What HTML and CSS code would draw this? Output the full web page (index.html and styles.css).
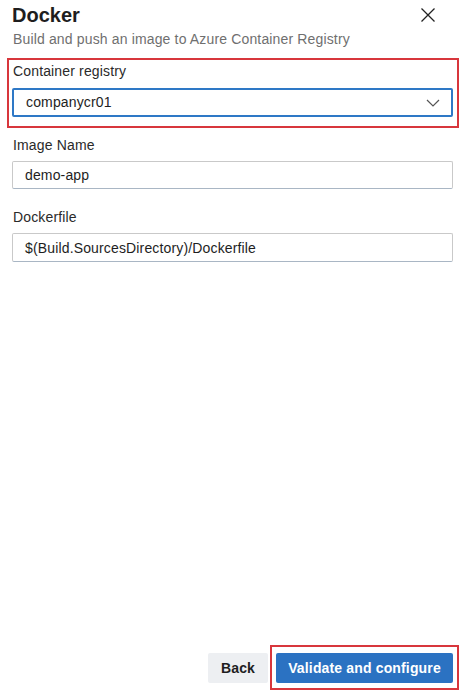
FILE: index.html
```html
<!DOCTYPE html>
<html lang="en">
<head>
<meta charset="utf-8">
<title>Docker</title>
<link rel="stylesheet" href="styles.css">
</head>
<body>
<div class="panel">
  <header class="header">
    <div class="header-text">
      <h1 class="title">Docker</h1>
      <p class="subtitle">Build and push an image to Azure Container Registry</p>
    </div>
    <button class="close" aria-label="Close">
      <svg width="16" height="16" viewBox="0 0 16 16"><path d="M1.5 1.5 L14.5 14.5 M14.5 1.5 L1.5 14.5" stroke="#222" stroke-width="1.3" fill="none"/></svg>
    </button>
  </header>

  <div class="highlight field-first">
    <label class="label">Container registry</label>
    <div class="select">
      <span class="select-value">companycr01</span>
      <svg class="chevron" width="14" height="8" viewBox="0 0 14 8"><path d="M1 1 L7 7 L13 1" stroke="#555" stroke-width="1.2" fill="none"/></svg>
    </div>
  </div>

  <div class="field field-image">
    <label class="label">Image Name</label>
    <div class="input">demo-app</div>
  </div>

  <div class="field field-docker">
    <label class="label">Dockerfile</label>
    <div class="input input-tall">$(Build.SourcesDirectory)/Dockerfile</div>
  </div>

  <footer class="footer">
    <button class="btn btn-secondary">Back</button>
    <div class="highlight-btn">
      <button class="btn btn-primary">Validate and configure</button>
    </div>
  </footer>
</div>
</body>
</html>
```

FILE: styles.css
```css
* { box-sizing: border-box; }
html, body { margin: 0; padding: 0; background: #fff; }
body {
  font-family: "Liberation Sans", Arial, sans-serif;
  color: #222;
  font-size: 14px;
  letter-spacing: 0.15px;
}
.panel {
  height: 695px;
  display: flex;
  flex-direction: column;
  padding: 3px 14px 0 12px;
}
.header {
  display: flex;
  justify-content: space-between;
  align-items: flex-start;
}
.title {
  margin: 0;
  font-size: 20px;
  line-height: 24px;
  font-weight: 700;
  color: #1e1e1e;
  letter-spacing: 0;
}
.subtitle {
  margin: 3px 0 0 1px;
  font-size: 14px;
  line-height: 18px;
  color: #6f6f6f;
}
.close {
  border: 0;
  background: none;
  padding: 0;
  margin: 4px 17px 0 0;
  width: 16px;
  height: 16px;
  display: flex;
}
.highlight {
  border: 2px solid #d8363c;
  margin: 10px -6px 0 -5px;
  padding: 1px 4px 9px 3px;
}
.label {
  display: block;
  font-size: 14px;
  line-height: 18px;
  color: #2a2a2a;
  margin-left: 1px;
}
.highlight .label { margin-top: 1px; }
.select {
  margin-top: 8px;
  height: 29px;
  border: 2px solid #2e78c6;
  border-radius: 2px;
  display: flex;
  align-items: center;
  justify-content: space-between;
  padding: 0 11px 2px 12px;
  color: #1e1e1e;
}
.select-value { font-size: 14px; }
.chevron { margin-top: 2px; }
.field-image { margin-top: 8px; }
.field-docker { margin-top: 19px; }
.input {
  margin-top: 7px;
  height: 28px;
  border: 1px solid #c9c9c9;
  border-bottom-color: #a9b6c4;
  border-radius: 2px;
  display: flex;
  align-items: center;
  padding: 0 12px;
  color: #1e1e1e;
  font-size: 14px;
}
.input-tall { height: 29px; }
.footer {
  margin-top: auto;
  margin-right: -6px;
  margin-bottom: 5px;
  display: flex;
  justify-content: flex-end;
  align-items: center;
  gap: 2px;
}
.btn {
  height: 30px;
  border: 0;
  border-radius: 2px;
  font-family: "Liberation Sans", Arial, sans-serif;
  font-size: 14px;
  font-weight: 700;
  padding: 0;
  cursor: pointer;
  letter-spacing: 0.15px;
}
.btn-secondary {
  width: 60px;
  background: #edeff2;
  color: #1e1e1e;
}
.highlight-btn {
  border: 2px solid #d8363c;
  padding: 6px 4px 5px 4px;
}
.btn-primary {
  width: 177px;
  background: #2b72c2;
  color: #fff;
  display: block;
}
```
